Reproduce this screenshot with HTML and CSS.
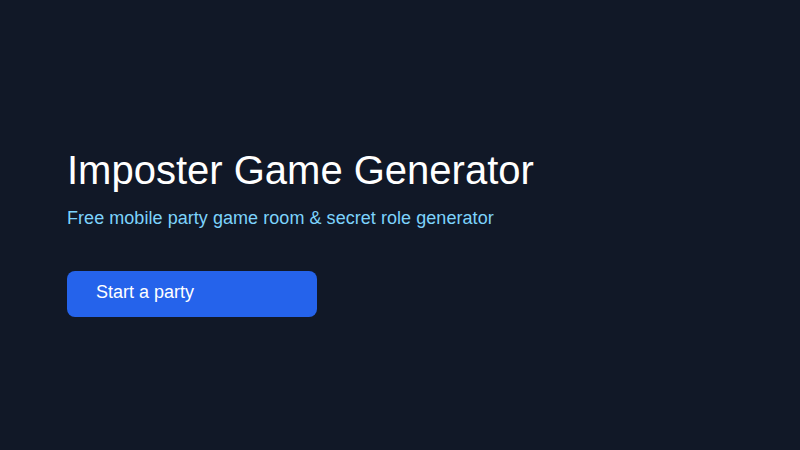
FILE: index.html
```html
<!DOCTYPE html>
<html lang="en">
<head>
  <meta charset="UTF-8" />
  <meta name="viewport" content="width=device-width, initial-scale=1.0" />
  <title>Imposter Game Generator</title>
  <link rel="stylesheet" href="styles.css">
</head>
<body>
  <main class="hero">
    <h1 class="hero-title">Imposter Game Generator</h1>
    <p class="hero-sub">Free mobile party game room &amp; secret role generator</p>
    <a href="#" class="btn-start">Start a party</a>
  </main>
</body>
</html>
```

FILE: styles.css
```css
* {
  box-sizing: border-box;
}
html, body {
  height: 100%;
}
body {
  margin: 0;
  background: #111827;
  color: #fff;
  font-family: "Liberation Sans", Arial, sans-serif;
}
.hero {
  height: 100%;
  display: flex;
  flex-direction: column;
  justify-content: center;
  align-items: flex-start;
  padding: 12px 67px 0;
}
.hero-title {
  margin: 0;
  font-size: 40px;
  font-weight: 400;
  line-height: 1.2;
}
.hero-sub {
  margin: 14px 0 0;
  font-size: 18px;
  letter-spacing: 0.05px;
  color: #7dd3fc;
}
.btn-start {
  display: block;
  width: 250px;
  margin-top: 42px;
  padding: 10px 29px 14px;
  background: #2563eb;
  color: #fff;
  font-size: 18px;
  line-height: 22px;
  text-decoration: none;
  border-radius: 8px;
}
```
